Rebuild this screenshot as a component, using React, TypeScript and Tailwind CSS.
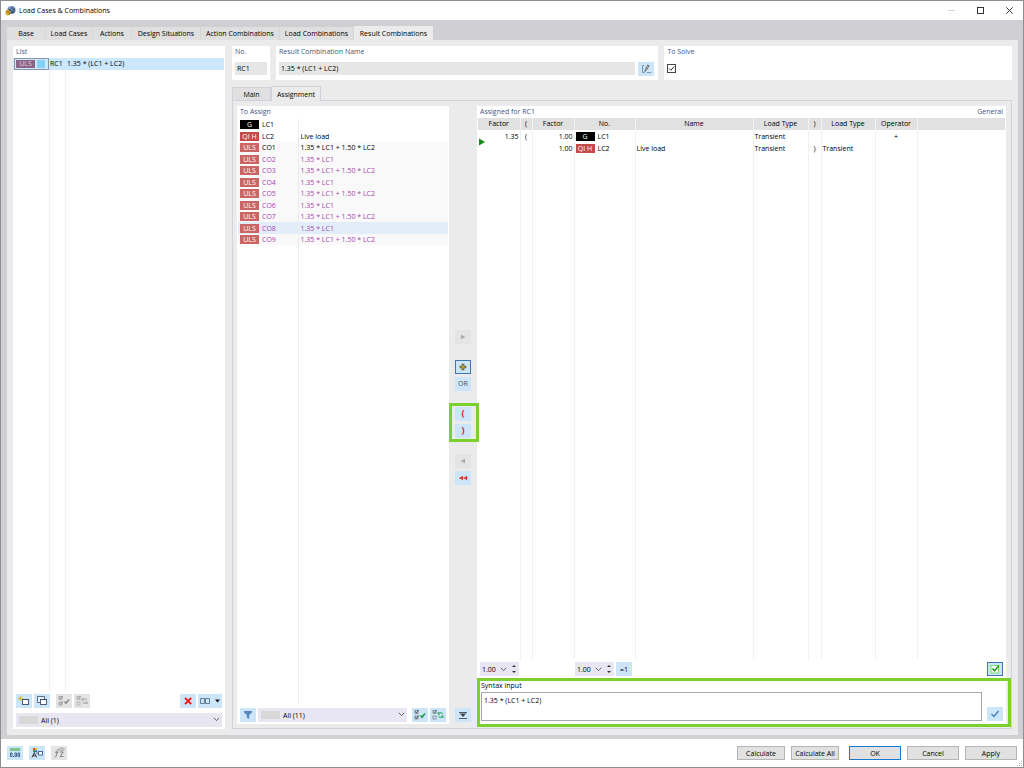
import { useState, ReactNode } from "react";
import clsx from "clsx";

interface LoadItem {
  tag: "G" | "QI H" | "ULS";
  no: string;
  text: string;
  generated?: boolean;
}

const MAIN_TABS = [
  { label: "Base", width: "w-[39px]" },
  { label: "Load Cases", width: "w-[47px]" },
  { label: "Actions", width: "w-[39px]" },
  { label: "Design Situations", width: "w-[69px]" },
  { label: "Action Combinations", width: "w-[79px]" },
  { label: "Load Combinations", width: "w-[74px]" },
  { label: "Result Combinations", width: "w-[79px]" },
];

const ITEMS: LoadItem[] = [
  { tag: "G", no: "LC1", text: "" },
  { tag: "QI H", no: "LC2", text: "Live load" },
  { tag: "ULS", no: "CO1", text: "1.35 * LC1 + 1.50 * LC2" },
  { tag: "ULS", no: "CO2", text: "1.35 * LC1", generated: true },
  { tag: "ULS", no: "CO3", text: "1.35 * LC1 + 1.50 * LC2", generated: true },
  { tag: "ULS", no: "CO4", text: "1.35 * LC1", generated: true },
  { tag: "ULS", no: "CO5", text: "1.35 * LC1 + 1.50 * LC2", generated: true },
  { tag: "ULS", no: "CO6", text: "1.35 * LC1", generated: true },
  { tag: "ULS", no: "CO7", text: "1.35 * LC1 + 1.50 * LC2", generated: true },
  { tag: "ULS", no: "CO8", text: "1.35 * LC1", generated: true },
  { tag: "ULS", no: "CO9", text: "1.35 * LC1 + 1.50 * LC2", generated: true },
];

const TAG_COLORS = {
  G: "bg-black",
  "QI H": "bg-[#c34a48]",
  ULS: "bg-[#ca6663]",
};

function Tag({ tag }: { tag: LoadItem["tag"] }) {
  return (
    <span className={clsx("block w-[19px] h-[9px] leading-[9px] text-center text-white", TAG_COLORS[tag])}>
      {tag}
    </span>
  );
}

function Title({ children }: { children: ReactNode }) {
  return <h2 className="h-3 px-[3px] leading-3 font-medium text-[#3f5684]">{children}</h2>;
}

interface ToolButtonProps {
  label: string;
  children: ReactNode;
  tone?: "blue" | "gray" | "active";
  wide?: boolean;
}

function ToolButton({ label, children, tone = "blue", wide }: ToolButtonProps) {
  return (
    <button
      type="button"
      aria-label={label}
      disabled={tone === "gray"}
      className={clsx(
        "h-[14px] flex items-center justify-center flex-shrink-0",
        wide ? "w-6" : "w-4",
        tone === "blue" && "bg-[#cce5f9]",
        tone === "gray" && "bg-[#e4e4e4]",
        tone === "active" && "bg-[#cce5f9] border border-[#3f78b0]"
      )}
    >
      {children}
    </button>
  );
}

function Icon({ children, w = 14 }: { children: ReactNode; w?: number }) {
  return (
    <svg width={w} height="12" viewBox={`0 0 ${w} 12`} fill="none" className="block flex-shrink-0">
      {children}
    </svg>
  );
}

function CheckListIcon({ mark, color, swap }: { mark: string; color: string; swap?: boolean }) {
  return (
    <Icon>
      <rect x="2" y="1.5" width="3" height="3" stroke={mark} strokeWidth="0.6" />
      <rect x="2" y="7" width="3" height="3" stroke={mark} strokeWidth="0.6" />
      <path d="M2.5 2.5L3.5 4L5.8 0.8" stroke={mark} strokeWidth="0.9" />
      {swap ? (
        <>
          <path d="M7 4.6C8.5 3.2 10 3.6 11.8 4.6M12 7.6C10.5 8.8 9 8.4 7.5 7.4" stroke={color} />
          <path d="M7 3V5.3H9M12.2 9V6.9H10.2" stroke={color} strokeWidth="0.7" />
        </>
      ) : (
        <>
          <path d="M2.5 8L3.5 9.5L5.8 6.3" stroke={mark} strokeWidth="0.9" />
          <path d="M7.5 6.5L9 8.3L12 4.5" stroke={color} strokeWidth="1.5" />
        </>
      )}
    </Icon>
  );
}

function FilterSelect({ label, text }: { label: string; text: string }) {
  return (
    <div className="relative flex-1 h-[14px]">
      <select aria-label={label} className="block w-full h-full pt-px pl-[25px] leading-3 appearance-none bg-[#e8e6f2] outline-none">
        <option>{text}</option>
      </select>
      <span className="absolute left-[3px] top-[3px] w-[19px] h-2 bg-[#d8d8d8] pointer-events-none" />
      <svg className="absolute right-[2px] top-1 pointer-events-none" width="7" height="5" viewBox="0 0 7 5" fill="none">
        <path d="M0.8 0.8L3.5 3.6L6.2 0.8" stroke="#555" strokeWidth="0.9" />
      </svg>
    </div>
  );
}

function FactorSpinner({ label }: { label: string }) {
  return (
    <div className="flex items-center w-[39px] h-[14px] bg-[#e8e6f2]">
      <input aria-label={label} defaultValue="1.00" className="w-[19px] pl-[2px] bg-transparent outline-none" />
      <button type="button" aria-label={`${label} list`} className="w-[9px] flex justify-center">
        <svg width="7" height="5" viewBox="0 0 7 5" fill="none">
          <path d="M0.8 0.8L3.5 3.6L6.2 0.8" stroke="#555" strokeWidth="0.9" />
        </svg>
      </button>
      <div className="flex-1 flex flex-col items-center gap-1">
        <button type="button" aria-label={`Increase ${label}`}>
          <svg className="block" width="4" height="2" viewBox="0 0 4 2"><path d="M0 2L2 0L4 2Z" fill="#333" /></svg>
        </button>
        <button type="button" aria-label={`Decrease ${label}`}>
          <svg className="block" width="4" height="2" viewBox="0 0 4 2"><path d="M0 0L2 2L4 0Z" fill="#333" /></svg>
        </button>
      </div>
    </div>
  );
}

function TitleBar() {
  return (
    <header className="h-[19px] flex items-center pl-1 pr-[10px] bg-white flex-shrink-0">
      <svg width="11" height="11" viewBox="0 0 22 22" fill="none">
        <circle cx="13" cy="10" r="8" fill="#536b97" />
        <path d="M6 6C9 1 15 1 19 5L12 12Z" fill="#8ca5cc" />
        <path d="M8 8L16 15M12 4L19 11M7 13L15 4" stroke="#283c63" strokeWidth="1.5" />
        <path d="M1 12L6 9L11 13L10 20L4 21L1 18Z" fill="#d3a82e" />
        <path d="M3 12L9 15L8 20" stroke="#8a6612" strokeWidth="1.5" />
      </svg>
      <h1 className="ml-[3px] font-medium leading-5">Load Cases &amp; Combinations</h1>
      <div className="flex items-center gap-[22px] ml-auto">
        <button type="button" aria-label="Minimize" disabled>
          <svg className="block" width="7" height="7" viewBox="0 0 7 7"><path d="M0 3.5H7" stroke="#d4d4d4" /></svg>
        </button>
        <button type="button" aria-label="Maximize">
          <svg className="block" width="7" height="7" viewBox="0 0 7 7" fill="none"><rect x="0.5" y="0.5" width="6" height="6" stroke="#333" /></svg>
        </button>
        <button type="button" aria-label="Close">
          <svg className="block" width="7" height="7" viewBox="0 0 7 7"><path d="M0.3 0.3L6.7 6.7M6.7 0.3L0.3 6.7" stroke="#222" strokeWidth="0.9" /></svg>
        </button>
      </div>
    </header>
  );
}

function ListPanel() {
  return (
    <section className="w-[212px] flex flex-col bg-white flex-shrink-0">
      <Title>List</Title>
      <div className="flex-1 min-h-0 pr-px">
        <table className="w-full h-full table-fixed border-collapse">
          <colgroup>
            <col className="w-9" />
            <col className="w-4" />
            <col />
          </colgroup>
          <tbody>
            <tr className="h-3 bg-[#cce8ff]">
              <td className="p-0 pl-px">
                <div className="h-3 flex items-center gap-[2px] pl-px border border-[#8795a5]">
                  <span className="w-[19px] h-2 leading-2 text-center text-[#e2d0e0] bg-[#8a6585]">ULS</span>
                  <span className="w-2 h-2 bg-[#84d2f6]" />
                </div>
              </td>
              <td className="p-0 pl-px leading-3">RC1</td>
              <td className="p-0 pl-[2px] leading-3">1.35 * (LC1 + LC2)</td>
            </tr>
            <tr>
              <td className="border-r border-[#f0f0f0]" />
              <td className="border-r border-[#f0f0f0]" />
              <td />
            </tr>
          </tbody>
        </table>
      </div>
      <div className="flex gap-[2px] px-[3px] pt-[3px]">
        <ToolButton label="New result combination">
          <Icon>
            <rect x="5.5" y="4.5" width="6" height="5" fill="#fff" stroke="#4a5e78" />
            <path d="M5 4.5H12" stroke="#35506f" />
            <path d="M3.5 1V6M1 3.5H6M1.8 1.8L5.2 5.2M5.2 1.8L1.8 5.2" stroke="#d8b21c" strokeWidth="0.7" />
          </Icon>
        </ToolButton>
        <ToolButton label="Copy result combination">
          <Icon>
            <rect x="2.5" y="1.5" width="7" height="6" fill="#e6f0f8" stroke="#5d7187" />
            <rect x="5.5" y="4.5" width="6" height="5" fill="#fff" stroke="#4a5e78" />
            <path d="M5 4.5H12" stroke="#35506f" />
          </Icon>
        </ToolButton>
        <span className="w-[2px]" />
        <ToolButton label="Select all" tone="gray"><CheckListIcon mark="#8b8b8b" color="#8b8b8b" /></ToolButton>
        <ToolButton label="Invert selection" tone="gray"><CheckListIcon mark="#9b9b9b" color="#9b9b9b" swap /></ToolButton>
        <span className="flex-1" />
        <ToolButton label="Delete">
          <Icon><path d="M4 2.8L10.2 9.2M10.2 2.8L4 9.2" stroke="#f01414" strokeWidth="1.9" /></Icon>
        </ToolButton>
        <ToolButton label="View options" wide>
          <Icon w={22}>
            <path d="M1.5 3.5H5.5V8.5H1.5ZM6.5 3.5H10.5V8.5H6.5Z" stroke="#59708a" strokeWidth="0.9" />
            <path d="M16 4.5H21L18.5 7.5Z" fill="#111" />
          </Icon>
        </ToolButton>
      </div>
      <div className="flex px-[3px] pt-[5px] pb-[2px]">
        <FilterSelect label="List filter" text="All (1)" />
      </div>
    </section>
  );
}

function ToAssignPanel() {
  const [selected, setSelected] = useState("CO8");

  return (
    <section className="w-[212px] flex flex-col bg-white flex-shrink-0">
      <Title>To Assign</Title>
      <div className="flex-1 min-h-0 px-px pt-px">
        <table className="w-full h-full table-fixed border-collapse">
          <colgroup>
            <col className="w-6" />
            <col className="w-9" />
            <col />
          </colgroup>
          <tbody>
            {ITEMS.map((item) => (
              <tr
                key={item.no}
                onClick={() => setSelected(item.no)}
                className={clsx(
                  "h-[11px] even:h-3 leading-[11px]",
                  item.no === selected ? "bg-[#e1eefa]" : item.tag === "ULS" && "bg-[#f9f9f9]",
                  item.generated && "text-[#a83fae]"
                )}
              >
                <td className="p-0 pl-[2px]"><Tag tag={item.tag} /></td>
                <td className="p-0 border-r border-[#ececec]">{item.no}</td>
                <td className="p-0 pl-[2px]">{item.text}</td>
              </tr>
            ))}
            <tr>
              <td />
              <td className="border-r border-[#ececec]" />
              <td />
            </tr>
          </tbody>
        </table>
      </div>
      <div className="flex gap-[2px] px-[3px] pt-[3px] pb-[2px]">
        <ToolButton label="Filter">
          <Icon><path d="M3 2H11V3.5L8.2 6V10L5.8 8.8V6L3 3.5Z" fill="#5b87bd" /></Icon>
        </ToolButton>
        <FilterSelect label="Assignment filter" text="All (11)" />
        <span className="w-px" />
        <ToolButton label="Select all"><CheckListIcon mark="#555" color="#169a3c" /></ToolButton>
        <ToolButton label="Invert selection"><CheckListIcon mark="#666" color="#169a3c" swap /></ToolButton>
      </div>
    </section>
  );
}

function TransferColumn() {
  return (
    <div className="w-7 flex flex-col items-center pb-[2px] flex-shrink-0">
      <div className="flex-1 flex flex-col items-center justify-center gap-4">
        <ToolButton label="Add" tone="gray">
          <Icon><path d="M5 3.8L9.5 6L5 8.2Z" fill="#aaa" /></Icon>
        </ToolButton>
        <div className="flex flex-col gap-[3px]">
          <ToolButton label="Add with plus" tone="active">
            <Icon>
              <path d="M7 2.7V9.3M3.7 6H10.3" stroke="#57542f" strokeWidth="2.6" />
              <path d="M7 3.4V8.6M4.4 6H9.6" stroke="#c9b03c" strokeWidth="1.1" />
            </Icon>
          </ToolButton>
          <ToolButton label="Add with or"><span className="text-[#555]">OR</span></ToolButton>
        </div>
        <div className="relative flex flex-col gap-[3px]">
          <ToolButton label="Open bracket"><span className="pb-[2px] text-[9px] font-bold text-[#d02828]">(</span></ToolButton>
          <ToolButton label="Close bracket"><span className="pb-[2px] text-[9px] font-bold text-[#d02828]">)</span></ToolButton>
          {/* highlight frame around the bracket buttons */}
          <span className="absolute -top-1 -bottom-1 -left-[6px] -right-2 z-10 border-[3px] border-[#7bd02e] pointer-events-none" />
        </div>
        <div className="flex flex-col gap-[3px]">
          <ToolButton label="Remove" tone="gray">
            <Icon><path d="M9 3.8L4.5 6L9 8.2Z" fill="#aaa" /></Icon>
          </ToolButton>
          <ToolButton label="Remove all">
            <Icon><path d="M7 3.8L2.8 6L7 8.2ZM11.2 3.8L7 6L11.2 8.2Z" fill="#e53434" /></Icon>
          </ToolButton>
        </div>
      </div>
      <ToolButton label="Toggle syntax input">
        <Icon><path d="M3 3.5H11M3 9.5H11" stroke="#4b5b6b" /><path d="M3.8 4.5H10.2L7 8Z" fill="#444" /></Icon>
      </ToolButton>
    </div>
  );
}

function AssignedPanel() {
  const headers = ["Factor", "(", "Factor", "No.", "Name", "Load Type", ")", "Load Type", "Operator", ""];
  const rows = [
    ["1.35", "(", "1.00", "LC1", "", "Transient", "", "", "+", ""],
    ["", "", "1.00", "LC2", "Live load", "Transient", ")", "Transient", "", ""],
  ];
  const right = [0, 2];
  const centered = [1, 6, 8];

  return (
    <section className="flex-1 min-w-0 flex flex-col bg-white">
      <div className="flex justify-between">
        <Title>Assigned for RC1</Title>
        <Title>General</Title>
      </div>
      <div className="relative flex-1 min-h-0 px-px">
        <table className="w-full h-full table-fixed border-collapse">
          <colgroup>
            <col className="w-[42px]" />
            <col className="w-3" />
            <col className="w-[42px]" />
            <col className="w-[61px]" />
            <col className="w-[118px]" />
            <col className="w-[55px]" />
            <col className="w-[13px]" />
            <col className="w-[54px]" />
            <col className="w-[42px]" />
            <col />
          </colgroup>
          <thead>
            <tr className="h-3 leading-3 bg-[#e1e1e1]">
              {headers.map((h, i) => (
                <th key={i} className="p-0 font-medium border-r border-[#f3f3f3] last:border-r-0">{h}</th>
              ))}
            </tr>
          </thead>
          <tbody>
            {rows.map((row, r) => (
              <tr key={r} className="h-[11px] first:h-[13px] leading-[11px]">
                {row.map((cell, i) => (
                  <td
                    key={i}
                    className={clsx(
                      "p-0 border-r border-[#f0f0f0] last:border-r-0",
                      right.includes(i) && "text-right pr-px",
                      centered.includes(i) && "text-center",
                      !right.includes(i) && !centered.includes(i) && "pl-px"
                    )}
                  >
                    {i === 3 ? (
                      <div className="flex items-center gap-[3px]">
                        <Tag tag={r === 0 ? "G" : "QI H"} />
                        {cell}
                      </div>
                    ) : (
                      cell
                    )}
                  </td>
                ))}
              </tr>
            ))}
            <tr>
              {headers.map((_, i) => (
                <td key={i} className="border-r border-[#f0f0f0] last:border-r-0" />
              ))}
            </tr>
          </tbody>
        </table>
        {/* insert position between the two rows */}
        <svg className="absolute left-[2px] top-5" width="6" height="8" viewBox="0 0 6 8">
          <path d="M0 0.5L6 4L0 7.5Z" fill="#138a13" />
        </svg>
      </div>
      <div className="flex items-center px-[3px] py-[3px]">
        <FactorSpinner label="Factor before bracket" />
        <span className="w-14" />
        <FactorSpinner label="Factor" />
        <span className="w-[2px]" />
        <ToolButton label="Set to one"><span>=1</span></ToolButton>
        <span className="flex-1" />
        <ToolButton label="Check syntax" tone="active">
          <Icon>
            <rect x="3" y="2.5" width="7.5" height="7.5" fill="#fff" stroke="#6fdc6f" />
            <path d="M4.5 5.5L6.5 8L11 2.5" stroke="#159515" strokeWidth="1.4" />
          </Icon>
        </ToolButton>
      </div>
      <div className="relative h-[45px]">
        <div className="h-full pl-1 pr-[3px] pb-[3px] flex flex-col">
          <label htmlFor="syntax" className="leading-3 pt-px">Syntax input</label>
          <div className="flex-1 min-h-0 flex items-end gap-[5px]">
            <textarea
              id="syntax"
              defaultValue="1.35 * (LC1 + LC2)"
              className="flex-1 h-full px-[2px] pt-[2px] leading-3 border border-[#a8a8a8] bg-white resize-none outline-none"
            />
            <ToolButton label="Apply syntax">
              <Icon><path d="M3.5 6L6 8.5L10.5 3" stroke="#4b7fbd" strokeWidth="1.4" /></Icon>
            </ToolButton>
          </div>
        </div>
        {/* highlight frame around the syntax input */}
        <span className="absolute -top-px -bottom-[3px] left-0 -right-[5px] border-[3px] border-[#7bd02e] pointer-events-none" />
      </div>
    </section>
  );
}

function Details() {
  const [tab, setTab] = useState("Assignment");

  return (
    <div className="flex-1 min-w-0 flex flex-col">
      <div className="flex gap-[6px] h-[34px] flex-shrink-0">
        <section className="w-[38px] bg-white">
          <Title>No.</Title>
          <input aria-label="Number" defaultValue="RC1" className="block mt-1 ml-[3px] w-8 h-[13px] px-[2px] bg-[#e6e6e6] outline-none" />
        </section>
        <section className="flex-[11] bg-white">
          <Title>Result Combination Name</Title>
          <div className="flex gap-[3px] pl-[3px] pr-1 mt-1">
            <input aria-label="Result Combination Name" defaultValue="1.35 * (LC1 + LC2)" className="flex-1 min-w-0 h-[13px] px-[2px] bg-[#e6e6e6] outline-none" />
            <ToolButton label="Edit name">
              <Icon>
                <path d="M5 2.5H3.5V9.5H5.5M8 9.5H12" stroke="#62809c" strokeWidth="0.8" />
                <path d="M5.8 8.5L6.5 6.2L8.8 2L10 2.8L7.5 7Z" fill="#fff" stroke="#444" strokeWidth="0.8" />
              </Icon>
            </ToolButton>
          </div>
        </section>
        <section className="flex-[10] bg-white">
          <Title>To Solve</Title>
          <div className="relative w-[9px] h-[9px] mt-[6px] ml-[3px]">
            <input type="checkbox" aria-label="To Solve" defaultChecked className="peer block w-[9px] h-[9px] appearance-none border border-[#444] bg-white" />
            <svg className="absolute inset-0 hidden peer-checked:block pointer-events-none" width="9" height="9" viewBox="0 0 9 9" fill="none">
              <path d="M2 4.5L3.8 6.3L7.2 2.5" stroke="#333" />
            </svg>
          </div>
        </section>
      </div>

      <div role="tablist" className="flex items-end h-[14px] mt-[6px] flex-shrink-0">
        {["Main", "Assignment"].map((t) => (
          <button
            key={t}
            type="button"
            role="tab"
            aria-selected={tab === t}
            onClick={() => setTab(t)}
            className={clsx(
              "border border-b-0 border-[#d3d2dc] font-medium",
              t === "Main" ? "w-[39px]" : "w-[50px]",
              tab === t ? "relative z-10 h-[15px] -mb-px bg-[#ebebeb]" : "h-[13px] bg-[#e0e0e0]"
            )}
          >
            {t}
          </button>
        ))}
      </div>
      <div className="flex-1 min-h-0 flex pl-1 pr-[5px] pt-[5px] pb-1 border border-[#d3d2dc]">
        <ToAssignPanel />
        <TransferColumn />
        <AssignedPanel />
      </div>
    </div>
  );
}

function Footer() {
  const actions = ["Calculate", "Calculate All", "OK", "Cancel", "Apply"];

  return (
    <footer className="relative h-7 flex items-center gap-[6px] px-[6px] bg-white flex-shrink-0">
      <ToolButton label="Units and decimal places">
        <Icon>
          <rect x="2" y="1" width="10" height="3" fill="#7fc58a" />
          <path d="M2.5 6H4V9.5H2.5ZM7 6H8.5V9.5H7ZM10 6H11.5V9.5H10Z" stroke="#234b7d" strokeWidth="0.8" />
          <path d="M5 9.5H6" stroke="#234b7d" />
        </Icon>
      </ToolButton>
      <ToolButton label="Display properties">
        <Icon>
          <path d="M3 1H5V3.2H3Z" fill="#e04a2e" />
          <path d="M5 1H7V3.2H5Z" fill="#e3c426" />
          <path d="M3 3.2H5V5H3Z" fill="#3a9a43" />
          <path d="M5 3.2H7V5H5Z" fill="#2f62c0" />
          <path d="M2 10.5L4.3 5.5L6.6 10.5M3 8.8H5.6" stroke="#222" strokeWidth="0.9" />
          <rect x="8.5" y="4.5" width="4" height="3.5" fill="#fff" stroke="#315b8d" strokeWidth="0.9" />
          <path d="M6 6H8.5" stroke="#315b8d" strokeWidth="0.8" />
        </Icon>
      </ToolButton>
      <ToolButton label="Formula" tone="gray">
        <Icon>
          <path d="M7 2.5C5.2 2 5.2 4 4.8 6C4.4 8.8 4 10.5 2.5 10M3 5.2H6.5M8 5H11.2L8.2 9.5H11.5" stroke="#777" strokeWidth="0.9" />
          <circle cx="8.5" cy="2.3" r="1.3" stroke="#888" strokeWidth="0.6" />
          <circle cx="11" cy="2.3" r="1.3" stroke="#888" strokeWidth="0.6" />
        </Icon>
      </ToolButton>
      <div className="flex gap-[6px] ml-auto">
        {actions.map((a) => (
          <button
            key={a}
            type="button"
            className={clsx(
              "h-[14px] bg-[#e1e1e1] border font-medium whitespace-nowrap flex items-center justify-center",
              a.startsWith("Calculate") ? "w-12" : "w-[52px]",
              a === "OK" ? "ml-1 border-[#1a79d0]" : "border-[#b5b5b5]"
            )}
          >
            {a}
          </button>
        ))}
      </div>
      <svg className="absolute right-0 bottom-0" width="7" height="7" viewBox="0 0 7 7" fill="#bbb">
        <path d="M5 1H6V2H5ZM3 3H4V4H3ZM5 3H6V4H5ZM1 5H2V6H1ZM3 5H4V6H3ZM5 5H6V6H5Z" />
      </svg>
    </footer>
  );
}

export default function App() {
  const [tab, setTab] = useState("Result Combinations");

  return (
    <div className="h-screen flex flex-col overflow-hidden border border-[#8e8e8e] bg-[#d0cfd4] text-[7px] leading-[11px] text-black font-['Open_Sans','Noto_Sans',sans-serif]">
      <TitleBar />
      <div role="tablist" className="flex items-end h-5 px-[6px] flex-shrink-0">
        {MAIN_TABS.map((t) => (
          <button
            key={t.label}
            type="button"
            role="tab"
            aria-selected={tab === t.label}
            onClick={() => setTab(t.label)}
            className={clsx(
              "whitespace-nowrap font-medium flex justify-center items-center",
              t.width,
              tab === t.label ? "h-[14px] bg-[#ebebeb]" : "h-[13px] bg-[#dfdfdf] border-r border-[#d6d6d6]"
            )}
          >
            {t.label}
          </button>
        ))}
      </div>
      <main className="flex-1 min-h-0 flex gap-[7px] ml-[6px] mr-[5px] mb-1 px-[6px] pt-[6px] pb-[6px] bg-[#ebebeb]">
        <ListPanel />
        <Details />
      </main>
      <Footer />
    </div>
  );
}
